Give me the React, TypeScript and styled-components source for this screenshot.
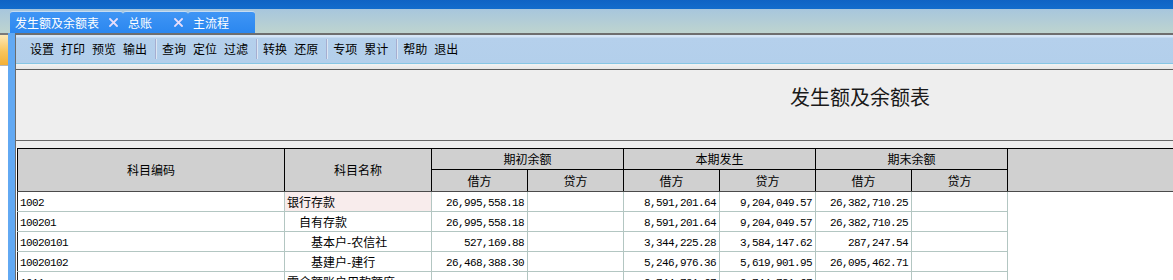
import styled, { createGlobalStyle } from "styled-components";

const GlobalStyle = createGlobalStyle`
  html, body {
    margin: 0;
    padding: 0;
    background: #ffffff;
  }
  body {
    font-family: "Noto Sans CJK SC", "Liberation Sans", sans-serif;
    font-size: 12px;
    color: #000;
  }
`;

const Page = styled.div`
  width: 1173px;
  height: 280px;
  overflow: hidden;
  display: flex;
  flex-direction: column;
`;

const TopBar = styled.div`
  height: 9px;
  background: linear-gradient(#0f63c4, #126ccc);
`;

const TabStrip = styled.div`
  height: 24px;
  display: flex;
  align-items: flex-end;
  padding-left: 10px;
  background: linear-gradient(#a7c6dd, #bed4cf);
`;

const Tab = styled.div<{ $width: number }>`
  width: ${(p) => p.$width}px;
  height: 22px;
  box-sizing: border-box;
  display: flex;
  align-items: center;
  justify-content: space-between;
  padding: 0 5px;
  border-top: 1px solid #c6dcf2;
  border-radius: 3px 3px 0 0;
  background: linear-gradient(#3f95f5, #2b87ef);
  color: #ffffff;
  font-size: 12px;
  white-space: nowrap;
`;

const Body = styled.div`
  flex: 1;
  display: flex;
  min-height: 0;
`;

const LeftPanel = styled.div`
  width: 8px;
  display: flex;
  flex-direction: column;
  border-top: 2px solid #7a7a7a;
`;

const OrangeBlock = styled.div`
  height: 30px;
  background: linear-gradient(#fde9b8, #f9c55c 55%, #f3b036);
  border-bottom: 1px solid #b8b8b8;
`;

const Rail = styled.div`
  width: 7px;
  background: #62a9f3;
  border-right: 1px solid #6c6c6c;
`;

const Main = styled.div`
  flex: 1;
  display: flex;
  flex-direction: column;
  background: #eeeeee;
  min-width: 0;
`;

const Toolbar = styled.div`
  height: 28px;
  display: flex;
  align-items: center;
  padding-left: 14px;
  border-top: 2px solid #6e6e6e;
  border-bottom: 1px solid #86c6e4;
  background: linear-gradient(#d6e6f7 0, #d6e6f7 2px, #b5d0ec 3px, #b3cfeb);
`;

const ToolItem = styled.span`
  margin-right: 7px;
  font-size: 12px;
  line-height: 14px;
  color: #000;
`;

const ToolSep = styled.span`
  width: 1px;
  height: 20px;
  margin: 0 5px 0 1px;
  background: #a6aed0;
  border-right: 1px solid #dbe6f3;
`;

const Strip = styled.div`
  height: 5px;
  background: linear-gradient(#f2f2f2, #e6e6e6);
  border-bottom: 1px solid #5c5c5c;
`;

const TitleArea = styled.div`
  height: 71px;
  box-sizing: border-box;
  padding: 15px 0 0 774px;
  border-bottom: 1px solid #666666;
`;

const Title = styled.div`
  font-size: 20px;
  line-height: 24px;
  color: #1a1a1a;
`;

const Gap = styled.div`
  height: 7px;
`;

const TableWrap = styled.div`
  flex: 1;
  padding-left: 1px;
  background: #ffffff;
  overflow: hidden;
`;

const Grid = styled.table`
  border-collapse: collapse;
  table-layout: fixed;
  width: 1156px;
  font-size: 12px;
`;

const Head = styled.th<{ $filler?: boolean }>`
  background: #d0d0d0;
  font-weight: normal;
  padding: 0;
  height: 20px;
  line-height: 14px;
  text-align: center;
  border: 1px solid #000;
  border-right: ${(p) => (p.$filler ? "none" : "1px solid #000")};
`;

const SubHead = styled(Head)`
  height: 21px;
  border-bottom: 1px solid #4a4a4a;
`;

const Cell = styled.td<{ $num?: boolean; $sel?: boolean; $indent?: number }>`
  height: 19px;
  padding: 0 ${(p) => (p.$num ? "3px" : "0")} 0
    ${(p) => (p.$num ? "0" : `${2 + (p.$indent || 0) * 12}px`)};
  border: 1px solid #b3c6c2;
  background: ${(p) => (p.$sel ? "#f8ecec" : "#ffffff")};
  text-align: ${(p) => (p.$num ? "right" : "left")};
  white-space: nowrap;
  overflow: hidden;
  line-height: 14px;
`;

const CodeCell = styled(Cell)`
  border-left: 1px solid #222;
`;

const Mono = styled.span`
  font-family: "Liberation Mono", "DejaVu Sans Mono", monospace;
  font-size: 11px;
  letter-spacing: -0.6px;
`;

const EmptyCell = styled.td`
  border: none;
  background: #ffffff;
`;

const Close = () => (
  <svg width="9" height="9" viewBox="0 0 9 9">
    <path
      d="M1 1 L8 8 M8 1 L1 8"
      stroke="#e6ddfb"
      strokeWidth="1.8"
      strokeLinecap="square"
    />
  </svg>
);

const tools = [
  ["设置", "打印", "预览", "输出"],
  ["查询", "定位", "过滤"],
  ["转换", "还原"],
  ["专项", "累计"],
  ["帮助", "退出"],
];

type Row = {
  code: string;
  name: string;
  level: number;
  sel?: boolean;
  values: string[];
};

const rows: Row[] = [
  {
    code: "1002",
    name: "银行存款",
    level: 0,
    sel: true,
    values: ["26,995,558.18", "", "8,591,201.64", "9,204,049.57", "26,382,710.25", ""],
  },
  {
    code: "100201",
    name: "自有存款",
    level: 1,
    values: ["26,995,558.18", "", "8,591,201.64", "9,204,049.57", "26,382,710.25", ""],
  },
  {
    code: "10020101",
    name: "基本户-农信社",
    level: 2,
    values: ["527,169.88", "", "3,344,225.28", "3,584,147.62", "287,247.54", ""],
  },
  {
    code: "10020102",
    name: "基建户-建行",
    level: 2,
    values: ["26,468,388.30", "", "5,246,976.36", "5,619,901.95", "26,095,462.71", ""],
  },
  {
    code: "1011",
    name: "零余额账户用款额度",
    level: 0,
    values: ["", "", "8,744,781.67", "8,744,781.67", "", ""],
  },
];

const colWidths = [267, 147, 96, 96, 96, 96, 96, 96];

export default function App() {
  return (
    <Page>
      <GlobalStyle />
      <TopBar />
      <TabStrip>
        <Tab $width={113}>
          发生额及余额表
          <Close />
        </Tab>
        <Tab $width={65}>
          总账
          <Close />
        </Tab>
        <Tab $width={67}>主流程</Tab>
      </TabStrip>
      <Body>
        <LeftPanel>
          <OrangeBlock />
        </LeftPanel>
        <Rail />
        <Main>
          <Toolbar>
            {tools.map((group, gi) => (
              <span key={gi} style={{ display: "contents" }}>
                {gi > 0 && <ToolSep />}
                {group.map((t) => (
                  <ToolItem key={t}>{t}</ToolItem>
                ))}
              </span>
            ))}
          </Toolbar>
          <Strip />
          <TitleArea>
            <Title>发生额及余额表</Title>
          </TitleArea>
          <Gap />
          <TableWrap>
            <Grid>
              <colgroup>
                {colWidths.map((w, i) => (
                  <col key={i} style={{ width: w }} />
                ))}
                <col />
              </colgroup>
              <thead>
                <tr>
                  <SubHead rowSpan={2}>科目编码</SubHead>
                  <SubHead rowSpan={2}>科目名称</SubHead>
                  <Head colSpan={2}>期初余额</Head>
                  <Head colSpan={2}>本期发生</Head>
                  <Head colSpan={2}>期末余额</Head>
                  <SubHead rowSpan={2} $filler />
                </tr>
                <tr>
                  {Array.from({ length: 3 }).flatMap((_, i) => [
                    <SubHead key={`d${i}`}>借方</SubHead>,
                    <SubHead key={`c${i}`}>贷方</SubHead>,
                  ])}
                </tr>
              </thead>
              <tbody>
                {rows.map((r) => (
                  <tr key={r.code}>
                    <CodeCell>
                      <Mono>{r.code}</Mono>
                    </CodeCell>
                    <Cell $sel={r.sel} $indent={r.level}>
                      {r.name}
                    </Cell>
                    {r.values.map((v, i) => (
                      <Cell key={i} $num>
                        <Mono>{v}</Mono>
                      </Cell>
                    ))}
                    <EmptyCell />
                  </tr>
                ))}
              </tbody>
            </Grid>
          </TableWrap>
        </Main>
      </Body>
    </Page>
  );
}
